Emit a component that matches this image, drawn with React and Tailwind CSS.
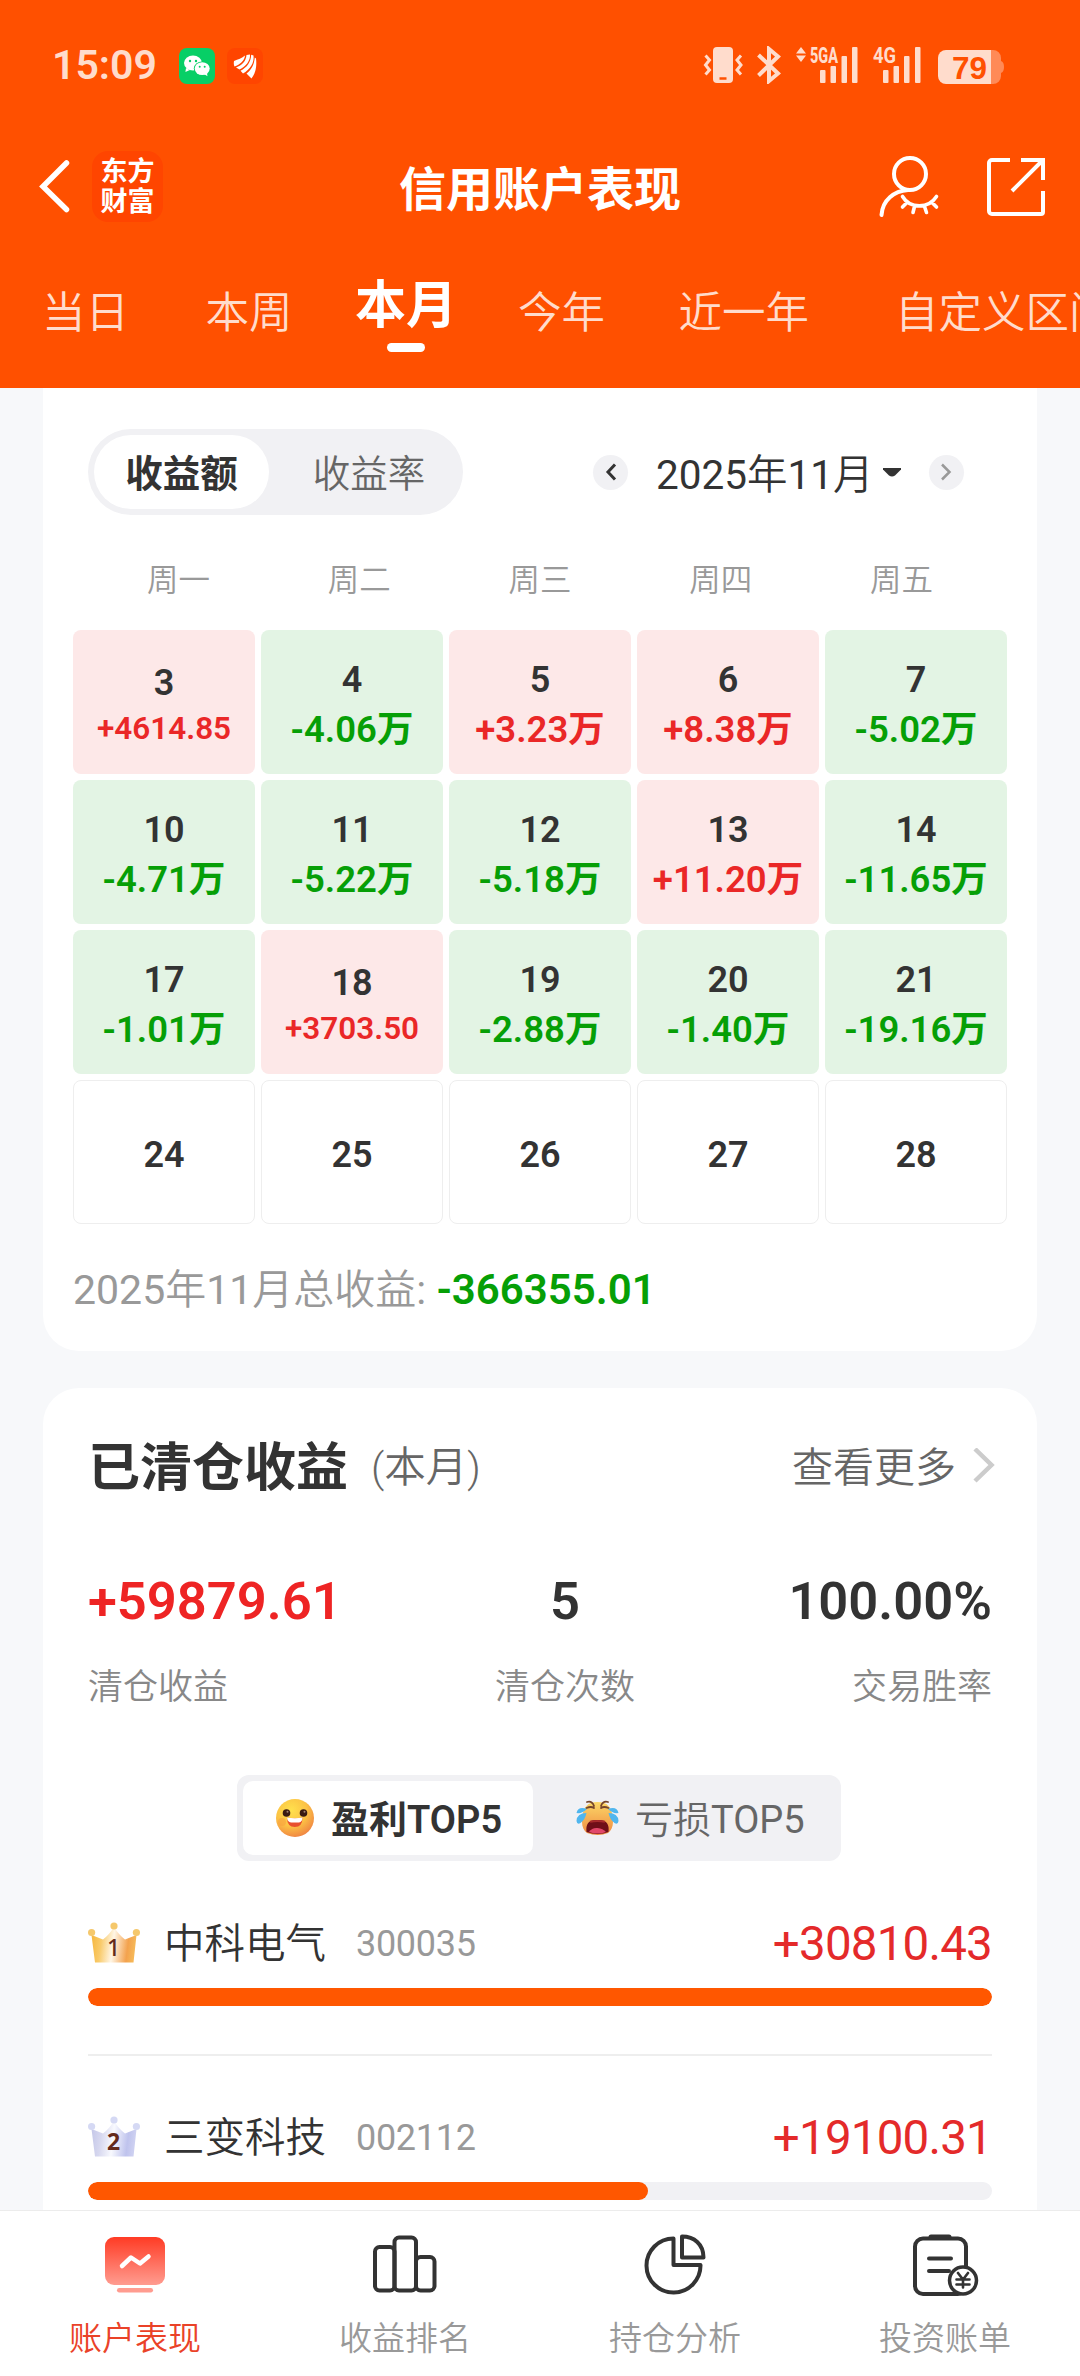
import React from 'react';

const weekdays = ['周一', '周二', '周三', '周四', '周五'];

const days = [
  { day: 3, value: '+4614.85', small: true },
  { day: 4, value: '-4.06万' },
  { day: 5, value: '+3.23万' },
  { day: 6, value: '+8.38万' },
  { day: 7, value: '-5.02万' },
  { day: 10, value: '-4.71万' },
  { day: 11, value: '-5.22万' },
  { day: 12, value: '-5.18万' },
  { day: 13, value: '+11.20万' },
  { day: 14, value: '-11.65万' },
  { day: 17, value: '-1.01万' },
  { day: 18, value: '+3703.50', small: true },
  { day: 19, value: '-2.88万' },
  { day: 20, value: '-1.40万' },
  { day: 21, value: '-19.16万' },
  { day: 24 },
  { day: 25 },
  { day: 26 },
  { day: 27 },
  { day: 28 },
];

const StatusBar = () => (
  <div className="flex h-[130px] items-center justify-between pl-[52px] pr-[76px] text-[#ffdccc]">
    <div className="flex items-center">
      <span className="w-[127px] text-[41px] font-semibold leading-[50px]">15:09</span>
      <svg width="36" height="36" viewBox="0 0 36 36" className="mt-px">
        <rect width="36" height="36" rx="8" fill="#07cf66" />
        <g fill="#fff">
          <ellipse cx="14" cy="15" rx="9" ry="7.6" />
          <path d="M7 20l-.6 4 4.500-2z" />
        </g>
        <ellipse cx="23.200" cy="20.600" rx="8.400" ry="7.200" fill="#07cf66" />
        <ellipse cx="23.200" cy="20.600" rx="7.500" ry="6.400" fill="#fff" />
        <path d="M25 26l3.500 2.200-.7-4z" fill="#fff" />
        <g fill="#07cf66">
          <circle cx="11" cy="13" r="1.200" />
          <circle cx="17" cy="13" r="1.200" />
          <circle cx="20.700" cy="18.800" r="1" />
          <circle cx="25.700" cy="18.800" r="1" />
        </g>
      </svg>
      <svg width="36" height="36" viewBox="0 0 36 36" className="ml-3 mt-px">
        <rect width="36" height="36" rx="8" fill="#ff4500" />
        <g fill="#fff">
          <path d="M7 13C11 11.500 15 10 18 7.500C17.500 13 13 16.500 7.500 18.500C6.800 17 6.600 15 7 13z" />
          <path d="M9 19.500C15 17 19 13.500 19.500 7L23 6.500C23.500 12.500 19 18.500 12.500 21.500z" />
          <path d="M13.500 22.800C20 19.500 24 14 24.200 6.800L26.500 7.500C27.500 15 23 21.500 16 25.500z" />
          <path d="M19.500 25.500C24 22 27 17.500 27.800 9.500L29 10.500C30 18.500 28.500 25.500 24.500 30.500z" />
        </g>
      </svg>
    </div>
    <div className="flex items-center">
      <svg width="40" height="38" viewBox="0 0 40 38" fill="none" stroke="#ffdccc" strokeWidth="3">
        <rect x="10" y="1" width="20" height="36" rx="4" fill="#ffdccc" stroke="none" />
        <path d="M16.500 32.500h7" stroke="#ff5000" strokeWidth="2.500" />
        <path d="M2.500 9.500l4 4.500l-4 5l4 5l-4 4.500M38 9.500l-4 4.500l4 5l-4 5l4 4.500" />
      </svg>
      <svg width="24" height="38" viewBox="0 0 24 38" className="ml-[14px]" fill="none" stroke="#ffdccc" strokeWidth="4">
        <path d="M1.500 9L21 27.500L12 35V3L21 10.500L1.500 29.500" />
      </svg>
      <svg width="64" height="38" viewBox="0 0 64 38" className="ml-[15px] overflow-visible" fill="#ffdccc">
        <path d="M0 7.500L5 1l5 6.500zM0 9.500h10L5 16z" />
        <text x="14" y="16.500" fontSize="22" fontWeight="800" textLength="28" lengthAdjust="spacingAndGlyphs">5GA</text>
        <rect x="24" y="24" width="5.500" height="13" rx="1" />
        <rect x="34.500" y="20" width="5.500" height="17" rx="1" />
        <rect x="45.500" y="10" width="5.500" height="27" rx="1" />
        <rect x="56" y="1" width="5.500" height="36" rx="1" />
      </svg>
      <svg width="50" height="38" viewBox="0 0 50 38" className="ml-[13px] overflow-visible" fill="#ffdccc">
        <text x="0" y="16.500" fontSize="22" fontWeight="700" textLength="23" lengthAdjust="spacingAndGlyphs">4G</text>
        <rect x="10" y="24" width="5.500" height="13" rx="1" />
        <rect x="20.500" y="20" width="5.500" height="17" rx="1" />
        <rect x="31" y="10" width="5.500" height="27" rx="1" />
        <rect x="42" y="1" width="5.500" height="36" rx="1" />
      </svg>
      <svg width="66" height="36" viewBox="0 0 66 36" className="ml-[15px] mt-1">
        <path d="M53 1h2a8 8 0 0 1 8 8v3q3 1 3 6t-3 6v3a8 8 0 0 1-8 8h-2z" fill="#ff8a57" />
        <path d="M8 1h45v34H8a8 8 0 0 1-8-8V9a8 8 0 0 1 8-8z" fill="#ffdccc" />
        <text x="14" y="29.500" fontSize="32" fontWeight="700" fill="#ff5000" textLength="35" lengthAdjust="spacingAndGlyphs" className="font-['Liberation_Sans',sans-serif]">79</text>
      </svg>
    </div>
  </div>
);

const Header = () => (
  <header className="h-[388px] shrink-0 overflow-hidden bg-[#ff5000]">
    <StatusBar />
    <div className="grid h-[112px] grid-cols-[1fr_auto_1fr] items-center px-[38px]">
      <div className="flex items-center">
        <svg width="32" height="54" viewBox="0 0 32 54" fill="none" stroke="#fff" strokeWidth="5.500" strokeLinecap="round">
          <path d="M28.500 4L5 27.500L28.500 50.500" />
        </svg>
        <div className="ml-[22px] flex h-[71px] w-[71px] items-center justify-center rounded-2xl bg-[#ff4500] pb-0.5 text-center font-['Noto_Sans_CJK_SC',sans-serif] text-[27px] font-bold leading-[30px] text-white">
          东方
          <br />
          财富
        </div>
      </div>
      <h1 className="pt-2 text-[47px] font-bold leading-[56px] text-white">信用账户表现</h1>
      <div className="-mr-[3px] flex items-center justify-end">
        <svg width="64" height="64" viewBox="0 0 64 64" fill="none" stroke="#fff" strokeWidth="4" strokeLinecap="round">
          <circle cx="33" cy="20" r="16" />
          <path d="M31 36C17 37 5.500 46 4.500 61" />
          <path d="M25.500 42.500C33 55 51.500 55 59.500 42.500M29.500 49l-4 4M37.500 52.500l-1.500 6M47.500 52.500l2 6M55.500 49l4 4" strokeWidth="3.600" />
        </svg>
        <svg width="60" height="60" viewBox="0 0 60 60" className="ml-[44px]" fill="none" stroke="#fff" strokeWidth="4">
          <path d="M25 4H7a3 3 0 0 0-3 3v48a3 3 0 0 0 3 3h49a2 2 0 0 0 2-2V35M36 4h22v20M57 5L27 35" />
        </svg>
      </div>
    </div>
    <nav className="flex h-[146px] whitespace-nowrap pl-[42px] pt-[42px] text-[43.5px] font-[350] leading-[60px] text-[#ffdccc]">
      <span className="w-[163.500px] shrink-0">当日</span>
      <span className="w-[147.500px] shrink-0">本周</span>
      <div className="-mt-[8px] ml-[2px] flex w-[102px] shrink-0 flex-col items-center">
        <span className="text-[51px] font-bold text-white">本月</span>
        <span className="mt-[7px] h-[9px] w-[38px] rounded-full bg-white" />
      </div>
      <span className="ml-[61px] shrink-0">今年</span>
      <span className="ml-[73.500px] shrink-0">近一年</span>
      <span className="ml-[86px] shrink-0">自定义区间</span>
    </nav>
  </header>
);

const DayCell = ({ day, value, small }) => {
  if (!value) {
    return (
      <div className="flex h-[144px] items-center justify-center rounded-lg border border-[#eeeeee] pt-1.5 text-[36px] font-semibold text-[#333]">
        {day}
      </div>
    );
  }
  const up = value.startsWith('+');
  return (
    <div className={`flex h-[144px] flex-col items-center justify-center rounded-lg pt-1 font-semibold ${up ? 'bg-[#fde8e8] text-[#ea2727]' : 'bg-[#e3f4e4] text-[#069f06]'}`}>
      <span className={small ? 'mt-1 text-[36px] leading-[46px] text-[#333]' : 'mt-0.5 text-[36px] leading-[49px] text-[#333]'}>{day}</span>
      <span className={small ? 'text-[31.5px] leading-[46px]' : 'text-[36.5px] leading-[49px]'}>{value}</span>
    </div>
  );
};

const CalendarCard = () => (
  <section className="mx-[43px] h-[963px] shrink-0 rounded-b-[36px] bg-white px-[30px] pt-[41px]">
    <div className="flex h-[86px] items-center px-[15px]">
      <div className="flex h-[86px] w-[375px] items-center rounded-full bg-[#f1f1f4] p-1.5 text-[37.5px] leading-[50px]">
        <span className="flex h-[74px] w-[175px] items-center justify-center rounded-full bg-white pt-1 font-bold text-[#333]">收益额</span>
        <span className="flex-1 pl-3 pt-1 text-center font-[350] text-[#666]">收益率</span>
      </div>
      <div className="ml-[130px] flex items-center">
        <span className="flex h-[35px] w-[35px] items-center justify-center rounded-full bg-[#f1f1f4]">
          <svg width="12" height="18" viewBox="0 0 12 18" fill="none" stroke="#333" strokeWidth="3">
            <path d="M10 1.500L3 9l7 7.500" />
          </svg>
        </span>
        <span className="ml-[28px] pt-[5px] text-[40.5px] font-normal leading-[50px] text-[#333]">
          2025<span className="font-[350]">年</span>11<span className="font-[350]">月</span>
        </span>
        <svg width="18" height="9" viewBox="0 0 18 9" className="ml-[9px]" fill="#333">
          <path d="M0 0h18v1.500L12 7.500Q9 9.500 6 7.500L0 1.500z" />
        </svg>
        <span className="ml-[28px] flex h-[35px] w-[35px] items-center justify-center rounded-full bg-[#f1f1f4]">
          <svg width="12" height="18" viewBox="0 0 12 18" fill="none" stroke="#999" strokeWidth="2.500">
            <path d="M2 1.500L9.500 9L2 16.500" />
          </svg>
        </span>
      </div>
    </div>
    <div className="mt-[41px] grid h-[74px] grid-cols-5 px-[15px] text-center text-[31.5px] font-[350] leading-[50px] text-[#999]">
      {weekdays.map((name) => (
        <span key={name}>{name}</span>
      ))}
    </div>
    <div className="grid grid-cols-5 gap-1.5">
      {days.map((item) => (
        <DayCell key={item.day} {...item} />
      ))}
    </div>
    <p className="mt-[41px] text-[41px] leading-[50px] text-[#999]">
      2025<span className="font-[350]">年</span>11<span className="font-[350]">月总收益</span>:{' '}
      <span className="text-[42px] font-semibold text-[#069f06]">-366355.01</span>
    </p>
  </section>
);

const GrinFace = () => (
  <svg width="38" height="38" viewBox="0 0 38 38">
    <defs>
      <radialGradient id="grin" cx="0.4" cy="0.3" r="0.75">
        <stop offset="0" stopColor="#ffe14d" />
        <stop offset="0.55" stopColor="#fcc244" />
        <stop offset="1" stopColor="#ef8043" />
      </radialGradient>
    </defs>
    <circle cx="19" cy="19" r="19" fill="url(#grin)" />
    <circle cx="6" cy="23" r="4" fill="#f9a03f" opacity="0.6" />
    <circle cx="10.500" cy="14" r="3.800" fill="#3a1a12" />
    <circle cx="27.500" cy="14" r="3.800" fill="#3a1a12" />
    <circle cx="11.500" cy="12.800" r="1" fill="#a08070" />
    <circle cx="28.500" cy="12.800" r="1" fill="#a08070" />
    <path d="M11 18.500q8 1.500 15.500 0q0 9.500-7.700 9.500T11 18.500z" fill="#e8502e" />
    <path d="M11 18.500q8 1.500 15.500 0q-.3 4.500-3.500 5h-8q-3.500-.5-4-5z" fill="#fff" />
  </svg>
);

const CryFace = () => (
  <svg width="43" height="36" viewBox="0 0 43 36">
    <defs>
      <linearGradient id="cry" x1="0" y1="0" x2="0" y2="1">
        <stop offset="0" stopColor="#fbd768" />
        <stop offset="1" stopColor="#f0893f" />
      </linearGradient>
    </defs>
    <path d="M21.500 2C32 2 36 8 36.500 17C38 25 36 30 32 33Q22 37 11 33C7 30 5 25 6.500 17C7 8 11 2 21.500 2z" fill="url(#cry)" />
    <path d="M10.500 32Q9 19 21.500 20Q34 19 32.500 32Q22 36 10.500 32z" fill="#6f0f18" />
    <path d="M13 32q3-4.500 8.500-4t8.500 4q-8 3-17 0z" fill="#e2486a" />
    <path d="M14 21.800q7.500-1.500 15 0" stroke="#a72b2b" strokeWidth="2" fill="none" />
    <g fill="none" stroke="#75452c" strokeWidth="1.800" strokeLinecap="round">
      <path d="M11 2q5-1.500 7 4M32 2q-5-1.500-7 4M10.500 8q4.500-2 7.500 0M32.500 8q-4.500-2-7.500 0" />
    </g>
    <g fill="#50b6ee">
      <path d="M11 9Q2 6 .5 13Q6 14 11 9zM10.500 13Q1 13 .5 21Q1 25 4.500 23Q9 20 10.500 13z" />
      <path d="M32 9Q41 6 42.500 13Q37 14 32 9zM32.500 13Q42 13 42.500 21Q42 25 38.500 23Q34 20 32.500 13z" />
    </g>
  </svg>
);

const Crown = ({ rank }) => {
  const gold = rank === 1;
  const id = `crown-${rank}`;
  return (
    <svg width="52" height="41" viewBox="0 0 52 41">
      <defs>
        <linearGradient id={id} x1="0" x2="1" y1="0" y2="0.1">
          <stop offset="0" stopColor={gold ? '#f6b437' : '#c3c6e8'} />
          <stop offset="0.25" stopColor={gold ? '#f9cb6b' : '#d7d8ef'} />
          <stop offset="0.52" stopColor={gold ? '#fff6e6' : '#f8f9fe'} />
          <stop offset="0.85" stopColor={gold ? '#f3a24e' : '#bfc3ed'} />
          <stop offset="1" stopColor={gold ? '#f6b757' : '#cdd0f1'} />
        </linearGradient>
      </defs>
      <path d="M3.500 13L15 17.500Q21 13 26 5Q31 13 37 17.500L48.500 13L45.500 40.500H7z" fill={`url(#${id})`} />
      <g fill={gold ? '#f5c86c' : '#d5d9f4'}>
        <circle cx="26" cy="4" r="3.600" />
        <circle cx="3.600" cy="10.500" r="3.600" />
        <circle cx="48.400" cy="10.500" r="3.600" />
      </g>
      <text x="25.500" y="34" textAnchor="middle" fontSize="23" fontWeight={gold ? 500 : 700} fill="#642a1c" className="font-['Noto_Sans',sans-serif]">{rank}</text>
    </svg>
  );
};

const StockRow = ({ rank, name, code, amount, percent }) => (
  <div className="h-[194px] shrink-0">
    <div className="flex h-[76px] items-center text-[#333]">
      <Crown rank={rank} />
      <span className="ml-6 pt-[3px] text-[40.5px] font-[350] leading-[50px]">{name}</span>
      <span className="ml-[30px] pt-[3px] text-[36px] leading-[50px] tracking-[-0.3px] text-[#999]">{code}</span>
      <span className="ml-auto pt-[3px] text-[47.5px] leading-[50px] tracking-[-0.8px] text-[#e42a2a]">{amount}</span>
    </div>
    <div className="mt-2 h-[17.5px] overflow-hidden rounded-full bg-[#f1f1f4]">
      <div className="h-full rounded-full bg-[#ff5700]" style={{ width: `${percent}%` }} />
    </div>
    <div className="mt-[48.500px] h-0.5 bg-[#eeeeee]" />
  </div>
);

const ClosedCard = () => (
  <section className="mx-[43px] mt-[37px] h-[900px] shrink-0 rounded-t-[36px] bg-white px-[45px] pt-[46px]">
    <div className="flex h-[64px] items-center">
      <h2 className="pt-[5px] text-[52px] font-bold leading-[64px] text-[#333]">已清仓收益</h2>
      <span className="ml-[23px] pt-[3px] text-[41.5px] font-[350] leading-[50px] text-[#666]">(本月)</span>
      <span className="ml-auto pt-[3px] text-[41px] font-[350] leading-[50px] text-[#666]">查看更多</span>
      <svg width="24" height="36" viewBox="0 0 24 36" className="-mr-1 ml-4" fill="none" stroke="#ccc" strokeWidth="4.500">
        <path d="M3 1L19.500 17L3 33" />
      </svg>
    </div>
    <div className="mt-[71px] flex justify-between text-[#333]">
      <div>
        <p className="text-[52.5px] font-semibold leading-[64px] text-[#ee2424]">+59879.61</p>
        <p className="mt-[25px] text-[35px] font-[350] leading-[60px] text-[#888]">清仓收益</p>
      </div>
      <div className="text-center">
        <p className="text-[52.5px] font-semibold leading-[64px]">5</p>
        <p className="mt-[25px] text-[35px] font-[350] leading-[60px] text-[#888]">清仓次数</p>
      </div>
      <div className="text-right">
        <p className="text-[52.5px] font-semibold leading-[64px]">100.00%</p>
        <p className="mt-[25px] text-[35px] font-[350] leading-[60px] text-[#888]">交易胜率</p>
      </div>
    </div>
    <div className="ml-[149px] mt-[57px] flex h-[86px] w-[604px] items-center rounded-xl bg-[#f1f1f4] p-1.5 text-[38px] leading-[50px]">
      <div className="flex h-[74px] w-[290px] items-center rounded-[10px] bg-white pl-[33px]">
        <GrinFace />
        <span className="ml-[17px] pt-1 font-semibold text-[#333]">盈利TOP5</span>
      </div>
      <div className="flex items-center pl-[43px]">
        <CryFace />
        <span className="ml-4 pt-1 font-normal text-[#666]">
          <span className="font-[350]">亏损</span>TOP5
        </span>
      </div>
    </div>
    <div className="mt-[43px]">
      <StockRow rank={1} name="中科电气" code="300035" amount="+30810.43" percent={100} />
      <StockRow rank={2} name="三变科技" code="002112" amount="+19100.31" percent={62} />
    </div>
  </section>
);

const tabs = [
  {
    label: '账户表现',
    active: true,
    icon: (
      <svg width="64" height="64" viewBox="0 0 64 64">
        <defs>
          <linearGradient id="screen" x1="0" y1="0" x2="0" y2="1">
            <stop offset="0" stopColor="#ff3b24" />
            <stop offset="1" stopColor="#ff9c90" />
          </linearGradient>
        </defs>
        <rect x="2" y="5" width="60" height="48" rx="9" fill="url(#screen)" />
        <rect x="14" y="56" width="36" height="4.500" rx="2.200" fill="#ff9c90" />
        <path d="M19 34L28 25.500L37 31.500L45.500 24.500" fill="none" stroke="#fff" strokeWidth="4.500" strokeLinecap="round" strokeLinejoin="round" />
      </svg>
    ),
  },
  {
    label: '收益排名',
    icon: (
      <svg width="64" height="64" viewBox="0 0 64 64" fill="none" stroke="#333" strokeWidth="4">
        <rect x="2" y="15" width="19.500" height="43.500" rx="4.500" />
        <rect x="21.500" y="5.500" width="21.500" height="53" rx="4.500" />
        <rect x="43" y="25" width="18.500" height="33.500" rx="4.500" />
      </svg>
    ),
  },
  {
    label: '持仓分析',
    icon: (
      <svg width="64" height="64" viewBox="0 0 64 64" fill="none" stroke="#333" strokeWidth="4" strokeLinejoin="round">
        <path d="M30.500 6.500V33H57.500A27 27 0 1 1 30.500 6.500z" />
        <path d="M39 4.500V25.500H60.500C60.500 12 51 4.500 39 4.500z" />
      </svg>
    ),
  },
  {
    label: '投资账单',
    icon: (
      <svg width="68" height="64" viewBox="0 0 68 64" fill="none" stroke="#333" strokeWidth="4" strokeLinecap="round">
        <rect x="4" y="6.500" width="51" height="55.500" rx="8" />
        <path d="M20 5h18" strokeWidth="5" />
        <path d="M18 26.500h22M18 39h20" />
        <circle cx="52" cy="48.500" r="13.500" fill="#fff" strokeWidth="3.500" />
        <path d="M47 41l5 6.500l5-6.500M52 47.500v8M45.500 47.500h13M45.500 52.500h13" strokeWidth="2.600" />
      </svg>
    ),
  },
];

const TabBar = () => (
  <footer className="grid h-[166px] shrink-0 grid-cols-4 border-t border-[#ececec] bg-white">
    {tabs.map((tab) => (
      <div key={tab.label} className="flex flex-col items-center pt-[21px]">
        {tab.icon}
        <span className={`mt-[19px] text-[33px] font-[350] leading-[48px] ${tab.active ? 'text-[#ea4228]' : 'text-[#999]'}`}>{tab.label}</span>
      </div>
    ))}
  </footer>
);

export default function App() {
  return (
    <div className="flex h-[2376px] w-[1080px] flex-col overflow-hidden bg-[#f7f8fa] font-['Roboto','Noto_Sans_CJK_SC',sans-serif]">
      <Header />
      <main className="flex h-[1822px] shrink-0 flex-col overflow-hidden">
        <CalendarCard />
        <ClosedCard />
      </main>
      <TabBar />
    </div>
  );
}
